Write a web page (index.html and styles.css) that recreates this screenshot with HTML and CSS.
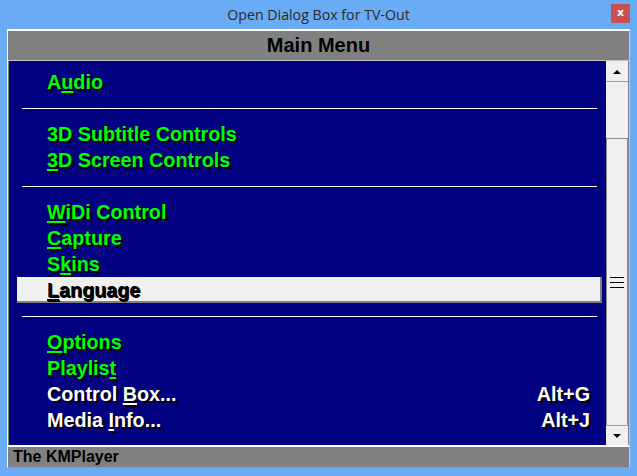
FILE: index.html
```html
<!DOCTYPE html>
<html>
<head>
<meta charset="utf-8">
<link rel="stylesheet" href="styles.css">
</head>
<body>
<div class="titlebar">
  <span></span>
  <span class="title">Open Dialog Box for TV-Out</span>
  <span class="close">x</span>
</div>
<div class="dialog">
  <div class="header">Main Menu</div>
  <div class="content">
    <div class="list">
      <div class="row"><span>A<u>u</u>dio</span></div>
      <div class="sep"></div>
      <div class="row"><span>3D Subtitle Controls</span></div>
      <div class="row"><span><u>3</u>D Screen Controls</span></div>
      <div class="sep"></div>
      <div class="row"><span><u>W</u>iDi Control</span></div>
      <div class="row"><span><u>C</u>apture</span></div>
      <div class="row"><span>S<u>k</u>ins</span></div>
      <div class="row selected"><span><u>L</u>anguage</span></div>
      <div class="sep"></div>
      <div class="row"><span><u>O</u>ptions</span></div>
      <div class="row"><span>Playlis<u>t</u></span></div>
      <div class="row white"><span>Control <u>B</u>ox...</span><span>Alt+G</span></div>
      <div class="row white"><span>Media <u>I</u>nfo...</span><span>Alt+J</span></div>
    </div>
    <div class="scrollbar">
      <div class="sb-btn up"><span class="tri-up"></span></div>
      <div class="track">
        <div class="thumb"><i></i><i></i><i></i></div>
      </div>
      <div class="sb-btn down"><span class="tri-down"></span></div>
    </div>
  </div>
  <div class="footer">The KMPlayer</div>
</div>
</body>
</html>
```
FILE: styles.css
```css
html, body {
  margin: 0;
  padding: 0;
}
body {
  width: 637px;
  height: 476px;
  background: #6aabf5;
  overflow: hidden;
  font-family: "Liberation Sans", Arial, sans-serif;
}
.titlebar {
  height: 29px;
  display: grid;
  grid-template-columns: 1fr auto 1fr;
  align-items: start;
}
.title {
  font-family: "Open Sans", "Noto Sans", sans-serif;
  font-size: 14.2px;
  line-height: 29px;
  color: #2b2b2b;
}
.close {
  justify-self: end;
  margin-top: 4px;
  margin-right: 7px;
  width: 19px;
  height: 19px;
  background: #c75050;
  color: #fff;
  font-family: "DejaVu Sans", sans-serif;
  font-weight: bold;
  font-size: 11px;
  line-height: 17px;
  text-align: center;
}
.dialog {
  margin-left: 7px;
  width: 621px;
  border-top: 2px solid #ffffff;
  border-left: 1px solid #ffffff;
  border-right: 1px solid #c8c8c8;
  border-bottom: 1px solid #9a9a9a;
  background: #808080;
}
.header {
  height: 29px;
  border-bottom: 1px solid #c4c4c4;
  text-align: center;
  font-weight: bold;
  font-size: 20px;
  line-height: 29px;
  color: #000;
}
.content {
  display: flex;
  height: 384px;
  padding: 0 1px;
}
.list {
  width: 597px;
  background: #000080;
  padding-top: 8px;
  box-sizing: border-box;
}
.row {
  height: 26px;
  line-height: 26px;
  padding-left: 38px;
  padding-right: 16px;
  font-weight: bold;
  font-size: 19.75px;
  color: #00ff00;
  text-shadow: 2px 2px 0 #000;
  display: flex;
  justify-content: space-between;
  white-space: nowrap;
}
.row u {
  text-decoration-thickness: 2px;
  text-underline-offset: 2px;
}
.row.white {
  color: #ffffff;
}
.row.selected {
  margin-left: 8px;
  margin-right: 4px;
  padding-left: 30px;
  box-sizing: border-box;
  background: #f0f0f0;
  border-right: 2px solid #808080;
  border-bottom: 2px solid #808080;
  color: #000;
  text-shadow: 1px 1px 0 #000;
}
.sep {
  height: 26px;
  display: flex;
  align-items: center;
  margin-left: 13px;
  margin-right: 9px;
}
.sep::before {
  content: "";
  flex: 1;
  height: 1px;
  margin-top: 1px;
  background: #ffffff;
}
.scrollbar {
  width: 22px;
  display: flex;
  flex-direction: column;
  background: #f0f0f0;
  padding-top: 1px;
  box-sizing: border-box;
}
.sb-btn {
  height: 19px;
  display: flex;
  align-items: center;
  justify-content: center;
  background: #f0f0f0;
}
.sb-btn.up {
  border-bottom: 1px solid #a0a0a0;
}
.sb-btn.down {
  border-top: 1px solid #a0a0a0;
}
.tri-up {
  width: 0;
  height: 0;
  border-left: 4px solid transparent;
  border-right: 4px solid transparent;
  border-bottom: 4px solid #000;
}
.tri-down {
  width: 0;
  height: 0;
  border-left: 4px solid transparent;
  border-right: 4px solid transparent;
  border-top: 4px solid #000;
}
.track {
  flex: 1;
  display: flex;
  flex-direction: column;
  justify-content: flex-end;
}
.thumb {
  height: 287px;
  box-sizing: border-box;
  border: 1px solid #8a8a8a;
  border-bottom: none;
  background: #f0f0f0;
  display: flex;
  flex-direction: column;
  align-items: center;
  justify-content: center;
  gap: 4px;
}
.thumb i {
  display: block;
  width: 14px;
  height: 1px;
  background: #000;
}
.footer {
  height: 20px;
  border-top: 2px solid #ffffff;
  padding-left: 5px;
  font-weight: bold;
  font-size: 16px;
  line-height: 20px;
  color: #000;
}
```
